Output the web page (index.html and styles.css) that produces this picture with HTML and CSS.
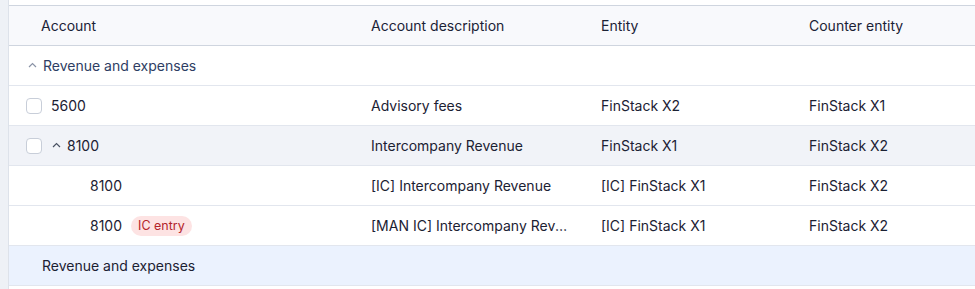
FILE: index.html
```html
<!DOCTYPE html>
<html lang="en">
<head>
<meta charset="utf-8">
<title>Accounts</title>
<link rel="stylesheet" href="styles.css">
</head>
<body>
<div class="page">
  <aside class="rail"></aside>
  <main class="main">
    <div class="table">
      <div class="row head">
        <div class="cell c1 pad-head">Account</div>
        <div class="cell">Account description</div>
        <div class="cell">Entity</div>
        <div class="cell">Counter entity</div>
      </div>

      <div class="row group">
        <div class="cell c1 pad-group">
          <svg class="chev light" width="9" height="6" viewBox="0 0 9 6"><path d="M1 5 L4.5 1.5 L8 5" fill="none" stroke="currentColor" stroke-width="1.2"/></svg>
          <span>Revenue and expenses</span>
        </div>
        <div class="cell"></div>
        <div class="cell"></div>
        <div class="cell"></div>
      </div>

      <div class="row">
        <div class="cell c1 pad-check">
          <span class="checkbox"></span>
          <span>5600</span>
        </div>
        <div class="cell">Advisory fees</div>
        <div class="cell">FinStack X2</div>
        <div class="cell">FinStack X1</div>
      </div>

      <div class="row hover">
        <div class="cell c1 pad-check">
          <span class="checkbox"></span>
          <svg class="chev dark" width="9" height="6" viewBox="0 0 9 6"><path d="M1 5 L4.5 1.5 L8 5" fill="none" stroke="currentColor" stroke-width="1.2"/></svg>
          <span class="after-chev">8100</span>
        </div>
        <div class="cell">Intercompany Revenue</div>
        <div class="cell">FinStack X1</div>
        <div class="cell">FinStack X2</div>
      </div>

      <div class="row">
        <div class="cell c1 pad-child">8100</div>
        <div class="cell">[IC] Intercompany Revenue</div>
        <div class="cell">[IC] FinStack X1</div>
        <div class="cell">FinStack X2</div>
      </div>

      <div class="row">
        <div class="cell c1 pad-child">
          <span>8100</span>
          <span class="badge">IC entry</span>
        </div>
        <div class="cell"><span class="trunc" title="[MAN IC] Intercompany Revenue">[MAN IC] Intercompany Revenue</span></div>
        <div class="cell">[IC] FinStack X1</div>
        <div class="cell">FinStack X2</div>
      </div>

      <div class="row total">
        <div class="cell c1 pad-total">Revenue and expenses</div>
        <div class="cell"></div>
        <div class="cell"></div>
        <div class="cell"></div>
      </div>
    </div>
  </main>
</div>
</body>
</html>
```

FILE: styles.css
```css
* { box-sizing: border-box; }

html, body {
  margin: 0;
  padding: 0;
  background: #ffffff;
  font-family: Inter, "Noto Sans", "Liberation Sans", sans-serif;
  font-size: 14px;
  color: #1b2133;
}

.page {
  display: flex;
  min-height: 289px;
}

.rail {
  width: 9px;
  flex: 0 0 9px;
  background: #eef1f6;
  border-right: 1px solid #dde2ea;
}

.main {
  flex: 1;
  padding-top: 5px;
  overflow: hidden;
}

.table {
  border-top: 1px solid #cfd5df;
}

.row {
  display: grid;
  grid-template-columns: 346px 230px 207px 1fr;
  height: 40px;
  border-bottom: 1px solid #e2e6ee;
}

.cell {
  display: flex;
  align-items: center;
  padding: 0 16px;
  min-width: 0;
  white-space: nowrap;
}

.cell:last-child { padding-left: 17px; }

.head {
  background: #f8f9fc;
  border-bottom-color: #cfd5df;
  color: #1b2236;
}

.hover { background: #f1f3f8; }
.total { background: #ebf2fe; }

.pad-head { padding-left: 32px; }
.pad-group { padding-left: 19px; color: #2e3d63; }
.pad-check { padding-left: 17px; }
.pad-child { padding-left: 81px; }
.pad-total { padding-left: 33px; }

.chev { display: block; flex: none; }
.chev.light { color: #8a93a6; margin-right: 6px; margin-top: -1px; }
.chev.dark { color: #4a5263; margin-left: 1px; margin-top: -1px; }

.after-chev { margin-left: 6px; }

.checkbox {
  width: 16px;
  height: 16px;
  flex: none;
  border: 1px solid #c8ced9;
  border-radius: 4px;
  background: #ffffff;
  margin-right: 9px;
}

.badge {
  margin-left: 9px;
  height: 20px;
  padding: 0 7px;
  border-radius: 10px;
  background: #fde3e3;
  color: #b4232b;
  font-size: 12.5px;
  display: inline-flex;
  align-items: center;
}

.trunc {
  overflow: hidden;
  text-overflow: ellipsis;
  white-space: nowrap;
  display: block;
  min-width: 0;
}
```
